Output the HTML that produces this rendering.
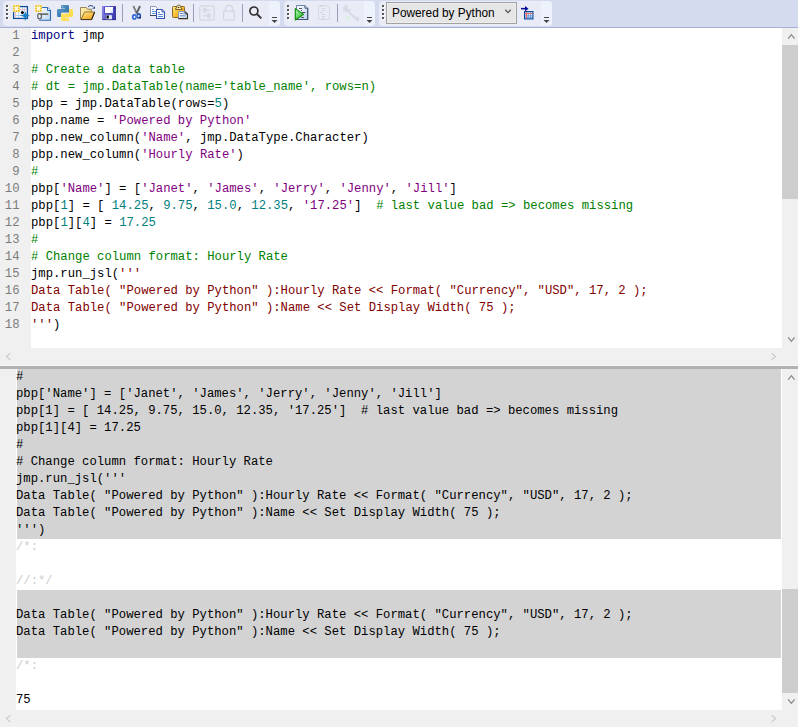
<!DOCTYPE html>
<html><head><meta charset="utf-8">
<style>
html,body{margin:0;padding:0;}
body{width:798px;height:727px;position:relative;overflow:hidden;background:#fff;font-family:"Liberation Sans",sans-serif;}
.abs{position:absolute;}
#tb{left:0;top:0;width:798px;height:27px;background:#d5dbef;border-bottom:1px solid #a7b0d6;box-sizing:border-box;height:28px;}
.panel{position:absolute;top:1px;height:25px;background:#e9ecf7;border-radius:4px;}
.ovf{position:absolute;top:0;height:25px;background:#eef2fc;border-radius:0 4px 4px 0;}
.grip{position:absolute;width:2px;height:2px;background:#5a5a5a;}
.sep{position:absolute;top:4px;width:1px;height:18px;background:#a8aec6;}
.code{font-family:"Liberation Mono",monospace;font-size:12.24px;line-height:17px;white-space:pre;}
.ln{position:absolute;left:0;height:17px;white-space:pre;}
.gut{position:absolute;left:0;width:31px;background:#f0f0f0;}
.num{position:absolute;left:0;width:19.5px;text-align:right;color:#7c7c7c;}
.kw{color:#00007f}
.cm{color:#007f00}
.st{color:#7f007f}
.nu{color:#007f7f}
.js{color:#7f0000}
.lc{color:#cdcdcd}
</style></head><body>
<div id="tb" class="abs">
  <div class="panel" style="left:3px;width:277px;"><div class="ovf" style="left:266px;width:11px;"></div></div>
  <div class="panel" style="left:284px;width:91px;"><div class="ovf" style="left:80px;width:11px;"></div></div>
  <div class="panel" style="left:379px;width:173px;"><div class="ovf" style="left:162px;width:11px;"></div></div>
  <div class="abs" style="left:386px;top:2px;width:131px;height:22px;box-sizing:border-box;border:1px solid #a2a2a2;background:#e6e6e6;box-shadow:inset 0 0 0 1px #eeeeee;"></div>
  <div class="abs" style="left:392px;top:5px;height:17px;line-height:17px;font-size:12.6px;color:#000;white-space:pre;transform:scaleX(0.94);transform-origin:0 0;">Powered by Python</div>
<svg class="abs" style="left:0;top:0;" width="798" height="28" viewBox="0 0 798 28">
<defs>
<linearGradient id="gDoc" x1="0" y1="0" x2="1" y2="1"><stop offset="0" stop-color="#ffffff"/><stop offset="1" stop-color="#b9d4f2"/></linearGradient>
<linearGradient id="gFold" x1="0" y1="0" x2="1" y2="1"><stop offset="0" stop-color="#fff8c0"/><stop offset="1" stop-color="#eeb83a"/></linearGradient>
<linearGradient id="gFront" x1="0" y1="0" x2="0.6" y2="1"><stop offset="0" stop-color="#ffe680"/><stop offset="1" stop-color="#f4a82a"/></linearGradient>
<linearGradient id="gFlop" x1="0" y1="0" x2="1" y2="0.3"><stop offset="0" stop-color="#8a8aea"/><stop offset="1" stop-color="#3c3cac"/></linearGradient>
<linearGradient id="gPy1" x1="0" y1="0" x2="1" y2="1"><stop offset="0" stop-color="#5a9fd4"/><stop offset="1" stop-color="#306998"/></linearGradient>
<linearGradient id="gPy2" x1="0" y1="0" x2="1" y2="1"><stop offset="0" stop-color="#ffe873"/><stop offset="1" stop-color="#ffd43b"/></linearGradient>
<linearGradient id="gClip" x1="0" y1="0" x2="1" y2="0.8"><stop offset="0" stop-color="#ffec80"/><stop offset="0.5" stop-color="#f8c030"/><stop offset="1" stop-color="#e89a00"/></linearGradient>
<linearGradient id="gGreen" x1="0" y1="0" x2="1" y2="1"><stop offset="0" stop-color="#b8f5b8"/><stop offset="1" stop-color="#18b418"/></linearGradient>
<radialGradient id="gSpark" cx="0.5" cy="0.5" r="0.7"><stop offset="0" stop-color="#ffffff"/><stop offset="0.4" stop-color="#fff3b8"/><stop offset="1" stop-color="#f7d45a"/></radialGradient>
</defs>
<!-- grips -->
<g fill="#ffffff"><rect x="7" y="6" width="2" height="2"/><rect x="7" y="10" width="2" height="2"/><rect x="7" y="14" width="2" height="2"/><rect x="7" y="18" width="2" height="2"/>
<rect x="288" y="6" width="2" height="2"/><rect x="288" y="10" width="2" height="2"/><rect x="288" y="14" width="2" height="2"/><rect x="288" y="18" width="2" height="2"/>
<rect x="383" y="6" width="2" height="2"/><rect x="383" y="10" width="2" height="2"/><rect x="383" y="14" width="2" height="2"/><rect x="383" y="18" width="2" height="2"/></g>
<g fill="#575757"><rect x="6" y="5" width="2" height="2"/><rect x="6" y="9" width="2" height="2"/><rect x="6" y="13" width="2" height="2"/><rect x="6" y="17" width="2" height="2"/>
<rect x="287" y="5" width="2" height="2"/><rect x="287" y="9" width="2" height="2"/><rect x="287" y="13" width="2" height="2"/><rect x="287" y="17" width="2" height="2"/>
<rect x="382" y="5" width="2" height="2"/><rect x="382" y="9" width="2" height="2"/><rect x="382" y="13" width="2" height="2"/><rect x="382" y="17" width="2" height="2"/></g>
<!-- separators -->
<g fill="#9a9eb6"><rect x="122" y="4" width="1" height="18"/><rect x="193" y="4" width="1" height="18"/><rect x="242" y="4" width="1" height="18"/><rect x="337" y="4" width="1" height="18"/></g>

<!-- icon1: new data table -->
<rect x="13.6" y="6.6" width="13.8" height="11.8" fill="#ffffff" stroke="#0a4c9c" stroke-width="1.3"/>
<g stroke="#a9c8ee" stroke-width="0.9"><line x1="18.5" y1="12" x2="18.5" y2="18"/><line x1="22.5" y1="7" x2="22.5" y2="11"/><line x1="24.5" y1="7" x2="24.5" y2="12"/><line x1="14" y1="15.5" x2="21" y2="15.5"/></g>
<g stroke="#f4b4b4" stroke-width="0.9"><line x1="15.5" y1="12" x2="15.5" y2="18"/><line x1="20" y1="9.5" x2="27" y2="9.5"/></g>
<rect x="13" y="5" width="7" height="7" fill="url(#gSpark)"/>
<g fill="#e0a800"><circle cx="14.3" cy="6.3" r="0.7"/><circle cx="16.5" cy="5.8" r="0.7"/><circle cx="18.7" cy="6.3" r="0.7"/><circle cx="14" cy="8.5" r="0.7"/><circle cx="19" cy="8.5" r="0.7"/><circle cx="14.3" cy="10.7" r="0.7"/><circle cx="16.5" cy="11.2" r="0.7"/><circle cx="18.7" cy="10.7" r="0.7"/></g>
<circle cx="22.4" cy="12.4" r="1.5" fill="#000"/>
<path d="M25.3,11.8 Q25.55,15.25 29.3,15.5 Q25.55,15.75 25.3,20.3 Q25.05,15.75 20.3,15.5 Q25.05,15.25 25.3,11.8 Z" fill="#1a7ec4" stroke="#1a7ec4" stroke-width="0.6" stroke-linejoin="round"/>

<!-- icon2: new script -->
<path d="M39.5,7.5 H47.5 L50.5,10.5 V20.3 H39.5 Z" fill="url(#gDoc)"/><path d="M42,7.5 H47.5 L50.5,10.5 V20.3 H39.2" fill="none" stroke="#2c6cb6" stroke-width="1.1"/>
<path d="M47.5,7.5 V10.5 H50.5" fill="#fff" stroke="#2c6cb6" stroke-width="1"/>
<rect x="35" y="5" width="7" height="7" fill="url(#gSpark)"/>
<g fill="#e0a800"><circle cx="36.3" cy="6.3" r="0.7"/><circle cx="38.5" cy="5.8" r="0.7"/><circle cx="40.7" cy="6.3" r="0.7"/><circle cx="36" cy="8.5" r="0.7"/><circle cx="41" cy="8.5" r="0.7"/><circle cx="36.3" cy="10.7" r="0.7"/><circle cx="38.5" cy="11.2" r="0.7"/><circle cx="40.7" cy="10.7" r="0.7"/></g>
<ellipse cx="39.6" cy="16.2" rx="1.9" ry="2.6" fill="none" stroke="#5f5f5f" stroke-width="1.2"/>
<rect x="40.5" y="13.3" width="7.8" height="1.7" fill="#6a6a6a"/>

<!-- icon3: python -->
<path d="M62.3,5 H67.7 Q69,5 69,6.3 V12.5 H62.3 Q61,12.5 61,13.8 V17 H58.3 Q57,17 57,15.7 V10.3 Q57,9 58.3,9 H65 V8.4 H61 V6.3 Q61,5 62.3,5 Z" fill="url(#gPy1)"/>
<path d="M67.7,21 H62.3 Q61,21 61,19.7 V13.5 H67.7 Q69,13.5 69,12.2 V9 H71.7 Q73,9 73,10.3 V15.7 Q73,17 71.7,17 H65 V17.6 H69 V19.7 Q69,21 67.7,21 Z" fill="url(#gPy2)"/>
<circle cx="62.8" cy="6.8" r="0.6" fill="#cfe0f0"/><circle cx="67.2" cy="19.2" r="0.6" fill="#fff7c0"/>

<!-- icon4: open folder -->
<path d="M80.5,19.5 V7.5 H86.3 L87.6,9.2 H91.5 V12.5" fill="url(#gFold)" stroke="#968660" stroke-width="1"/>
<path d="M81,19.5 L84.6,12 H94.6 L91.7,19.5 Z" fill="url(#gFront)" stroke="#8a7444" stroke-width="0.9"/>
<path d="M91.6,19.6 L94.6,12" stroke="#2a2210" stroke-width="1.1"/>
<path d="M80.8,19.6 H91.8" stroke="#3a3020" stroke-width="0.9"/>
<path d="M88.2,6.9 Q90.6,4.2 93,6.6" fill="none" stroke="#34558c" stroke-width="1.1"/>
<path d="M92.2,8.8 L95,5.9 L95,8.8 Z" fill="#2f4f86"/>
<!-- icon5: floppy -->
<rect x="102" y="6" width="14" height="14" fill="url(#gFlop)"/>
<rect x="104.2" y="6.6" width="9.6" height="7.2" fill="#4646c0"/>
<rect x="105" y="7" width="8" height="6" fill="#ffffff"/>
<path d="M109.5,13 L113,8.5 V13 Z" fill="#dae4f4"/>
<rect x="106.3" y="15.2" width="5.6" height="4.6" fill="#e8ecf8"/>
<rect x="106.6" y="15.5" width="2.2" height="3" fill="#000"/>
<rect x="114.4" y="7.6" width="1" height="1.4" fill="#202060"/>
<rect x="102.5" y="19.3" width="13.5" height="0.8" fill="#2a2a88"/>
<!-- icon6: scissors -->
<path d="M133.4,6 L136.9,13.6" stroke="#7d8188" stroke-width="1.9"/>
<path d="M140,6 L136.5,13.6" stroke="#5a5f66" stroke-width="1.9"/>
<ellipse cx="134.3" cy="16.9" rx="2.4" ry="2.9" fill="#2c62d6"/>
<ellipse cx="138.8" cy="15.9" rx="2.3" ry="2.8" fill="#1f50bc"/>
<ellipse cx="134.5" cy="17" rx="0.9" ry="1.2" fill="#f4f6fa"/>
<ellipse cx="138.6" cy="16" rx="0.9" ry="1.2" fill="#dfe3ea"/>
<circle cx="140.3" cy="17.8" r="0.7" fill="#101030"/>
<!-- icon7: copy -->
<path d="M150.5,6.5 H155.5 L157.5,8.5 V15.5 H150.5 Z" fill="#fff" stroke="#8797b6" stroke-width="1"/>
<rect x="150" y="15" width="7" height="1" fill="#3c4460"/>
<g fill="#6a98dc"><rect x="152" y="9" width="2" height="1"/><rect x="152" y="11" width="4" height="1"/><rect x="152" y="13" width="4" height="1"/></g>
<path d="M156.5,9.5 H162 L164.5,12 V18.5 H156.5 Z" fill="#fff" stroke="#3454b4" stroke-width="1.1"/>
<path d="M162,9.5 V12 H164.5" fill="#dfe8f8" stroke="#3454b4" stroke-width="1"/>
<g fill="#4f86d8"><rect x="158" y="12" width="2" height="1"/><rect x="158" y="14" width="5" height="1"/><rect x="158" y="16" width="5" height="1"/></g>

<!-- icon8: paste -->
<rect x="172.5" y="6.5" width="12" height="11" rx="0.8" fill="url(#gClip)" stroke="#8a6a30" stroke-width="1"/>
<path d="M175.5,9.5 Q175.5,7.5 177,7.5 V6.6 Q177,5 178.8,5 Q180.6,5 180.6,6.6 V7.5 Q182,7.5 182,9.5 Z" fill="#fff4a0" stroke="#6a5430" stroke-width="0.9"/>
<circle cx="178.7" cy="7.4" r="0.75" fill="#333"/>
<path d="M178.6,18.5 V11.6 H185 L187.5,14 V18.5 Z" fill="url(#gDoc)"/>
<path d="M178.6,18.5 V11.6 H185" fill="none" stroke="#7f94c2" stroke-width="1"/>
<path d="M185,11.6 L187.5,14 V18.6 H178.3" fill="none" stroke="#3a3020" stroke-width="1.1"/>
<path d="M185,11.6 V14 H187.5" fill="none" stroke="#3a4a6a" stroke-width="0.9"/>
<g fill="#7088b8"><rect x="180" y="13" width="3.5" height="1"/><rect x="180" y="15.3" width="5.5" height="1"/></g>
<!-- icon9: sliders disabled -->
<rect x="199.8" y="5.8" width="14.4" height="14.4" rx="1.5" fill="none" stroke="#d2d6e2" stroke-width="1.2"/>
<g stroke="#d2d6e2" stroke-width="1.1" fill="none"><line x1="202" y1="10.2" x2="211" y2="10.2"/><line x1="202.5" y1="15.8" x2="211" y2="15.8"/><rect x="203.8" y="8" width="2.2" height="4.5" rx="1"/><rect x="207.8" y="13.5" width="2.2" height="4.5" rx="1"/></g>

<!-- icon10: lock disabled -->
<path d="M225.5,11 V8.5 Q225.5,5.5 229,5.5 Q232.5,5.5 232.5,8.5 V11" fill="none" stroke="#d2d6e2" stroke-width="1.3"/>
<rect x="223.6" y="11.2" width="10.8" height="8.8" rx="0.8" fill="none" stroke="#d2d6e2" stroke-width="1.2"/>

<!-- icon11: magnifier -->
<circle cx="253.9" cy="11" r="4" fill="none" stroke="#303030" stroke-width="1.7"/>
<line x1="256.9" y1="14" x2="261.3" y2="18.4" stroke="#303030" stroke-width="1.9"/>

<!-- overflow arrows -->
<g fill="#454545"><rect x="272" y="17" width="5" height="1"/><path d="M271.5,20 H277.5 L274.5,23 Z"/>
<rect x="367" y="17" width="5" height="1"/><path d="M366.5,20 H372.5 L369.5,23 Z"/>
<rect x="544" y="17" width="5" height="1"/><path d="M543.5,20 H549.5 L546.5,23 Z"/></g>

<!-- icon12: run script -->
<path d="M296.5,5.5 H305 L307.7,8.2 V19.5 H296.5 Z" fill="url(#gDoc)" stroke="#6d86a8" stroke-width="1"/>
<path d="M307.7,8.2 V19.5 H297" fill="none" stroke="#3d4d6d" stroke-width="1.1"/>
<path d="M305,5.5 V8.2 H307.7" fill="#dfe8f8" stroke="#3d4d6d" stroke-width="1"/>
<g fill="#555"><rect x="299" y="8" width="3" height="1"/><rect x="301" y="10" width="1" height="1"/><rect x="302" y="12" width="3.5" height="1"/><rect x="301" y="17" width="3" height="1"/></g>
<path d="M295.3,8.6 L303.6,14.4 L295.3,20 Z" fill="url(#gGreen)" stroke="#088a08" stroke-width="1.1" stroke-linejoin="round"/>

<!-- icon13: disabled doc -->
<path d="M318.5,5.5 H327 L329.5,8 V19.5 H318.5 Z" fill="none" stroke="#d6dae5" stroke-width="1"/>
<g fill="#d3d7e3"><rect x="320" y="6" width="3" height="1"/><rect x="322" y="8" width="3" height="1"/><rect x="322" y="10" width="3" height="1"/><rect x="320" y="12" width="2.5" height="1"/><rect x="322" y="14" width="3" height="1"/><rect x="322" y="16" width="3" height="1"/><rect x="322" y="18" width="3" height="1"/></g>
<!-- icon14: disabled wrench -->
<g fill="#d8dbe6">
<path d="M346.8,8.5 L357,18.2 L355.4,19.8 L345.2,10.1 Z"/>
<path d="M343,8 Q343,5 346,5 L348.5,5.5 L347,7.5 L349,9.5 L350.8,8.2 Q351.5,11.5 348.5,12 L345,12 Q343,11 343,8 Z"/>
<path d="M359.5,19.5 Q359.5,22 357,21.5 L355.5,21.3 L356.6,19.8 L355,18.3 L353.5,19.3 Q353,17 355,16.5 L357.5,16.8 Q359.5,17.5 359.5,19.5 Z"/>
</g>
<path d="M345.8,15 L350.3,18.3 L345.8,21.3 Z" fill="#dcefe2"/>
<!-- icon15: move to data table -->
<rect x="521" y="7.9" width="5" height="1.5" fill="#0c0c9a"/>
<path d="M525,6 L528.6,8.65 L525,11.3 Z" fill="#0c0c9a"/>
<rect x="524.6" y="11.6" width="8.3" height="7.3" fill="#fff" stroke="#0a4c9c" stroke-width="1.2"/>
<g stroke="#5a90d8" stroke-width="0.9"><line x1="528.2" y1="12" x2="528.2" y2="18.5"/><line x1="530.6" y1="12" x2="530.6" y2="18.5"/><line x1="525" y1="15.8" x2="532.5" y2="15.8"/><line x1="525" y1="17.4" x2="532.5" y2="17.4"/></g>
<g stroke="#f06060" stroke-width="1"><line x1="525" y1="13.6" x2="532.5" y2="13.6"/><line x1="526.4" y1="12" x2="526.4" y2="18.5"/></g>
<!-- combo chevron -->
<path d="M505.3,9.8 L508,12.6 L510.7,9.8" fill="none" stroke="#555" stroke-width="1.3"/>
</svg>

</div>

<!-- top editor -->
<div class="abs" style="left:0;top:28px;width:781px;height:320px;background:#fff;"></div>
<div class="abs gut" style="top:28px;height:320px;"></div>
<div id="ed" class="abs code" style="left:0;top:28px;width:781px;height:320px;">
<div class="num ln" style="top:0px;left:0;">1</div>
<div class="num ln" style="top:17px;left:0;">2</div>
<div class="num ln" style="top:34px;left:0;">3</div>
<div class="num ln" style="top:51px;left:0;">4</div>
<div class="num ln" style="top:68px;left:0;">5</div>
<div class="num ln" style="top:85px;left:0;">6</div>
<div class="num ln" style="top:102px;left:0;">7</div>
<div class="num ln" style="top:119px;left:0;">8</div>
<div class="num ln" style="top:136px;left:0;">9</div>
<div class="num ln" style="top:153px;left:0;">10</div>
<div class="num ln" style="top:170px;left:0;">11</div>
<div class="num ln" style="top:187px;left:0;">12</div>
<div class="num ln" style="top:204px;left:0;">13</div>
<div class="num ln" style="top:221px;left:0;">14</div>
<div class="num ln" style="top:238px;left:0;">15</div>
<div class="num ln" style="top:255px;left:0;">16</div>
<div class="num ln" style="top:272px;left:0;">17</div>
<div class="num ln" style="top:289px;left:0;">18</div>
<div class="ln" style="top:0px;left:31px;"><span class="kw">import</span> jmp</div>
<div class="ln" style="top:17px;left:31px;"></div>
<div class="ln" style="top:34px;left:31px;"><span class="cm"># Create a data table</span></div>
<div class="ln" style="top:51px;left:31px;"><span class="cm"># dt = jmp.DataTable(name='table_name', rows=n)</span></div>
<div class="ln" style="top:68px;left:31px;">pbp = jmp.DataTable(rows=<span class="nu">5</span>)</div>
<div class="ln" style="top:85px;left:31px;">pbp.name = <span class="st">'Powered by Python'</span></div>
<div class="ln" style="top:102px;left:31px;">pbp.new_column(<span class="st">'Name'</span>, jmp.DataType.Character)</div>
<div class="ln" style="top:119px;left:31px;">pbp.new_column(<span class="st">'Hourly Rate'</span>)</div>
<div class="ln" style="top:136px;left:31px;"><span class="cm">#</span></div>
<div class="ln" style="top:153px;left:31px;">pbp[<span class="st">'Name'</span>] = [<span class="st">'Janet'</span>, <span class="st">'James'</span>, <span class="st">'Jerry'</span>, <span class="st">'Jenny'</span>, <span class="st">'Jill'</span>]</div>
<div class="ln" style="top:170px;left:31px;">pbp[<span class="nu">1</span>] = [ <span class="nu">14.25</span>, <span class="nu">9.75</span>, <span class="nu">15.0</span>, <span class="nu">12.35</span>, <span class="st">'17.25'</span>]  <span class="cm"># last value bad =&gt; becomes missing</span></div>
<div class="ln" style="top:187px;left:31px;">pbp[<span class="nu">1</span>][<span class="nu">4</span>] = <span class="nu">17.25</span></div>
<div class="ln" style="top:204px;left:31px;"><span class="cm">#</span></div>
<div class="ln" style="top:221px;left:31px;"><span class="cm"># Change column format: Hourly Rate</span></div>
<div class="ln" style="top:238px;left:31px;">jmp.run_jsl(<span class="js">'''</span></div>
<div class="ln" style="top:255px;left:31px;"><span class="js">Data Table( "Powered by Python" ):Hourly Rate &lt;&lt; Format( "Currency", "USD", 17, 2 );</span></div>
<div class="ln" style="top:272px;left:31px;"><span class="js">Data Table( "Powered by Python" ):Name &lt;&lt; Set Display Width( 75 );</span></div>
<div class="ln" style="top:289px;left:31px;"><span class="js">'''</span>)</div>
</div>

<!-- top v scrollbar -->
<div class="abs" style="left:782px;top:28px;width:16px;height:337px;background:#f0f0f0;"></div>
<div class="abs" style="left:782px;top:45px;width:16px;height:154px;background:#cdcdcd;"></div>
<!-- top h scrollbar -->
<div class="abs" style="left:0;top:348px;width:782px;height:17px;background:#f0f0f0;"></div>
<!-- splitter -->
<div class="abs" style="left:0;top:365px;width:798px;height:1px;background:#f8f8f8;"></div>
<div class="abs" style="left:0;top:366px;width:798px;height:3px;background:#b1b1b1;"></div>

<!-- log -->
<div class="abs" style="left:0;top:369px;width:16px;height:341px;background:#f0f0f0;"></div>
<div class="abs" style="left:17px;top:369px;width:764px;height:170px;background:#d3d3d3;"></div>
<div class="abs" style="left:17px;top:590px;width:764px;height:68px;background:#d3d3d3;"></div>
<div class="abs" style="left:782px;top:369px;width:16px;height:358px;background:#f0f0f0;"></div>
<div class="abs" style="left:782px;top:589px;width:16px;height:104px;background:#cdcdcd;"></div>
<div class="abs" style="left:0;top:710px;width:782px;height:17px;background:#f0f0f0;"></div>
<svg class="abs" style="left:0;top:0;" width="798" height="727" viewBox="0 0 798 727">
<g fill="none" stroke-width="1.2">
<path d="M788.2,38.6 L791.4,34.6 L794.6,38.6" stroke="#868686"/>
<path d="M788.2,337.4 L791.4,341.4 L794.6,337.4" stroke="#868686"/>
<path d="M788.2,379.6 L791.4,375.6 L794.6,379.6" stroke="#868686"/>
<path d="M788.2,699.4 L791.4,703.4 L794.6,699.4" stroke="#868686"/>
<path d="M10.4,353.2 L6.4,356.6 L10.4,360" stroke="#cbcbcb"/>
<path d="M771.6,353.2 L775.6,356.6 L771.6,360" stroke="#cbcbcb"/>
<path d="M10.4,715.2 L6.4,718.6 L10.4,722" stroke="#cbcbcb"/>
<path d="M771.6,715.2 L775.6,718.6 L771.6,722" stroke="#cbcbcb"/>
</g></svg>
<div id="log" class="abs code" style="left:16px;top:369px;width:764px;height:341px;">
<div class="ln" style="top:0px;left:0;">#</div>
<div class="ln" style="top:17px;left:0;">pbp['Name'] = ['Janet', 'James', 'Jerry', 'Jenny', 'Jill']</div>
<div class="ln" style="top:34px;left:0;">pbp[1] = [ 14.25, 9.75, 15.0, 12.35, '17.25']  # last value bad =&gt; becomes missing</div>
<div class="ln" style="top:51px;left:0;">pbp[1][4] = 17.25</div>
<div class="ln" style="top:68px;left:0;">#</div>
<div class="ln" style="top:85px;left:0;"># Change column format: Hourly Rate</div>
<div class="ln" style="top:102px;left:0;">jmp.run_jsl('''</div>
<div class="ln" style="top:119px;left:0;">Data Table( "Powered by Python" ):Hourly Rate &lt;&lt; Format( "Currency", "USD", 17, 2 );</div>
<div class="ln" style="top:136px;left:0;">Data Table( "Powered by Python" ):Name &lt;&lt; Set Display Width( 75 );</div>
<div class="ln" style="top:153px;left:0;">''')</div>
<div class="ln" style="top:170px;left:0;"><span class="lc">/*:</span></div>
<div class="ln" style="top:204px;left:0;"><span class="lc">//:*/</span></div>
<div class="ln" style="top:238px;left:0;">Data Table( "Powered by Python" ):Hourly Rate &lt;&lt; Format( "Currency", "USD", 17, 2 );</div>
<div class="ln" style="top:255px;left:0;">Data Table( "Powered by Python" ):Name &lt;&lt; Set Display Width( 75 );</div>
<div class="ln" style="top:289px;left:0;"><span class="lc">/*:</span></div>
<div class="ln" style="top:323px;left:0;">75</div>
</div>
</body></html>
